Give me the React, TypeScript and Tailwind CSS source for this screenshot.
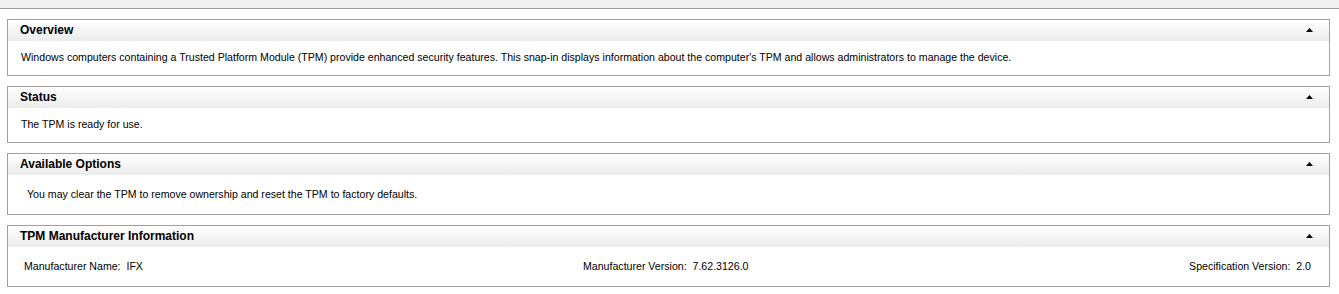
import React from "react";

function Caret() {
  return (
    <svg width="7" height="4" viewBox="0 0 7 4" className="block">
      <path d="M3.5 0 L7 4 L0 4 Z" fill="#000" />
    </svg>
  );
}

function Section({ title, children, bodyClass }: { title: string; children: React.ReactNode; bodyClass: string }) {
  return (
    <div className="border border-[#a0a0a0] bg-white">
      <div className="h-[21px] flex items-center justify-between pl-[12px] pr-[16px] pb-[2px] bg-gradient-to-b from-white to-[#ececec]">
        <span className="font-bold text-[12px] text-black">{title}</span>
        <Caret />
      </div>
      <div className={bodyClass}>{children}</div>
    </div>
  );
}

export default function App() {
  return (
    <div className="w-[1339px] h-[294px] bg-white text-[10.6px] text-black overflow-hidden" style={{ fontFamily: '"Liberation Sans", Arial, sans-serif' }}>
      <div className="h-[9px] bg-[#f0f0f0] border-b border-[#a0a0a0]" />
      <div className="flex flex-col gap-[10px] pl-[7px] pr-[9px] pt-[10px]">
        <Section title="Overview" bodyClass="h-[34px] flex items-center pl-[13px]">
          Windows computers containing a Trusted Platform Module (TPM) provide enhanced security features. This snap-in displays information about the computer's TPM and allows administrators to manage the device.
        </Section>
        <Section title="Status" bodyClass="h-[34px] flex items-center pl-[13px]">
          The TPM is ready for use.
        </Section>
        <Section title="Available Options" bodyClass="h-[39px] flex items-center pl-[19px]">
          You may clear the TPM to remove ownership and reset the TPM to factory defaults.
        </Section>
        <Section title="TPM Manufacturer Information" bodyClass="h-[39px] flex items-center pl-[16px] pr-[18px]">
          <div className="w-[559px]">Manufacturer Name:&nbsp;&nbsp;IFX</div>
          <div className="flex-1">Manufacturer Version:&nbsp;&nbsp;7.62.3126.0</div>
          <div>Specification Version:&nbsp;&nbsp;2.0</div>
        </Section>
      </div>
    </div>
  );
}
